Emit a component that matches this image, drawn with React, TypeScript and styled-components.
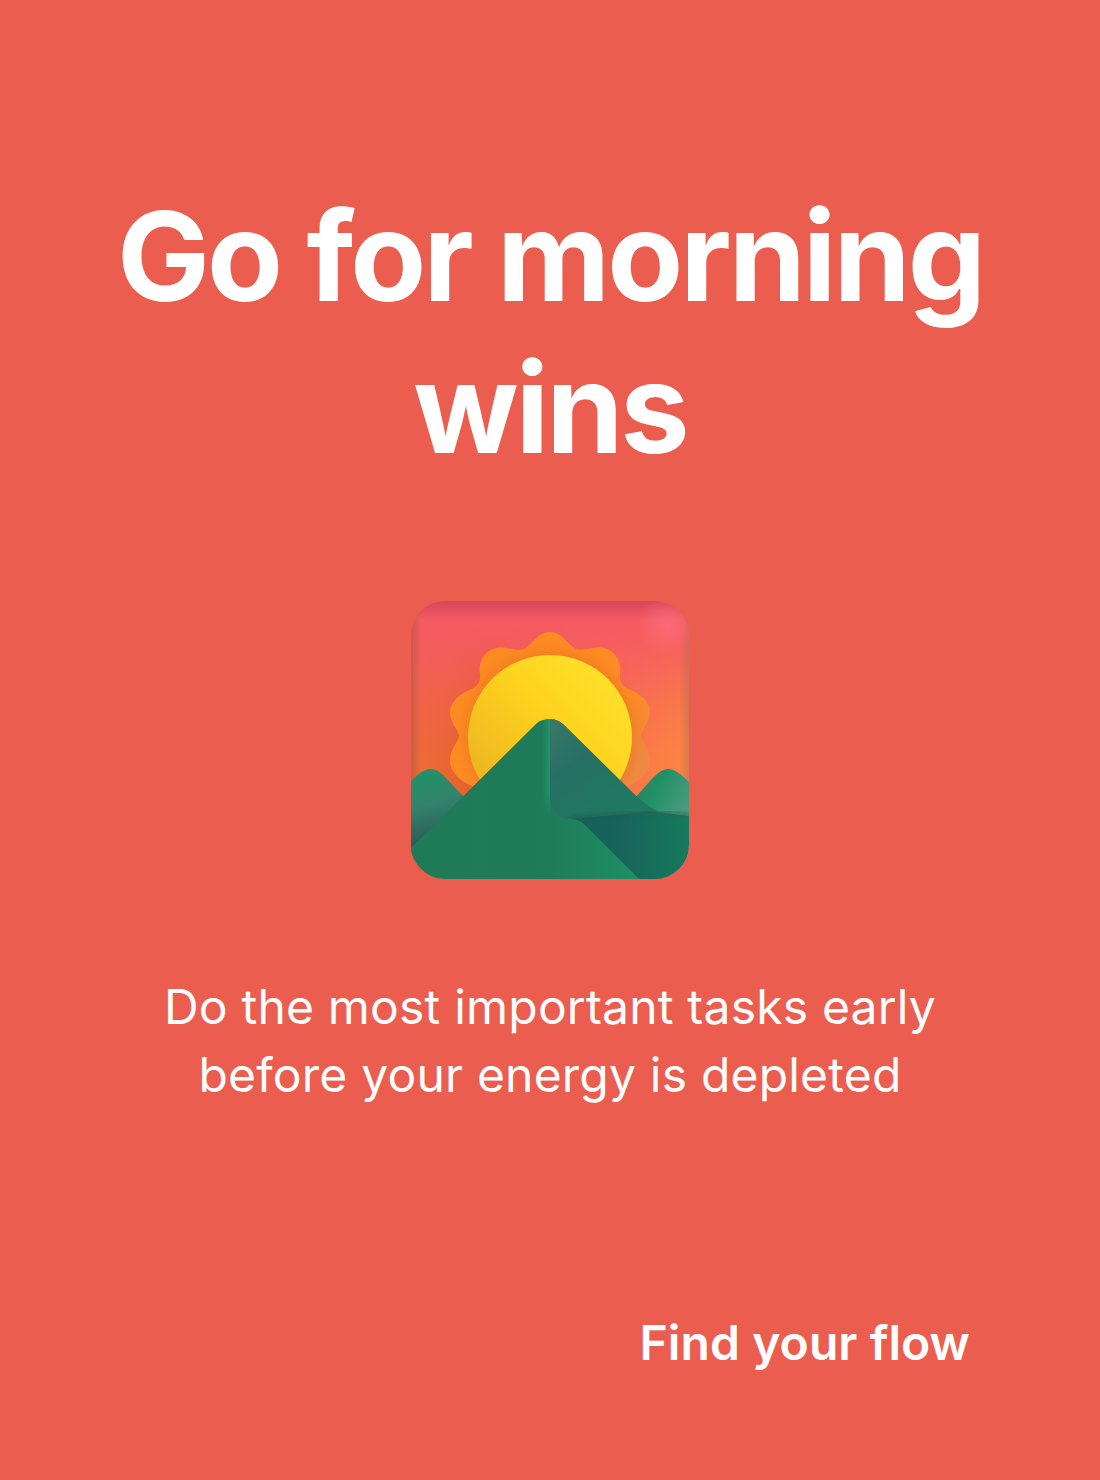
import React from "react";
import styled, { createGlobalStyle } from "styled-components";

const Global = createGlobalStyle`
  html, body { margin: 0; padding: 0; background: #eb5e4f; }
  * { box-sizing: border-box; }
`;

const Page = styled.main`
  width: 1100px;
  height: 1480px;
  background: #eb5e4f;
  color: #fff;
  font-family: Inter, "Liberation Sans", sans-serif;
  display: flex;
  flex-direction: column;
  align-items: center;
  padding: 180px 130px 0;
`;

const Title = styled.h1`
  margin: 0;
  width: 900px;
  flex: none;
  font-size: 124px;
  line-height: 152px;
  font-weight: 700;
  letter-spacing: -3px;
  text-align: center;
`;

const Art = styled.svg`
  display: block;
  width: 300px;
  height: 300px;
  margin-top: 106px;
  flex: none;
`;

const Subtitle = styled.p`
  margin: 83px 0 0;
  font-size: 48px;
  line-height: 68px;
  font-weight: 400;
  letter-spacing: 0.2px;
  text-align: center;
  white-space: nowrap;
`;

const Footer = styled.div`
  align-self: flex-end;
  margin-top: 200px;
  font-size: 48px;
  line-height: 68px;
  font-weight: 600;
  letter-spacing: 0.08px;
  white-space: nowrap;
`;

const SunriseIcon = () => (
  <Art viewBox="0 0 300 300" role="img" aria-label="Sunrise over mountains">
    <defs>
      <clipPath id="tile"><rect x="11" y="11" width="278" height="278" rx="34" /></clipPath>
      <linearGradient id="sky" x1="0" y1="0" x2="0" y2="1">
        <stop offset="0" stopColor="#f55a64" />
        <stop offset="0.22" stopColor="#f55e5e" />
        <stop offset="0.6" stopColor="#f4703f" />
        <stop offset="1" stopColor="#ee6a2e" />
      </linearGradient>
      <linearGradient id="skySide" x1="0" y1="0" x2="1" y2="0">
        <stop offset="0" stopColor="#e0642c" stopOpacity="0.3" />
        <stop offset="0.3" stopColor="#dd5424" stopOpacity="0.75" />
        <stop offset="0.7" stopColor="#ff7c50" stopOpacity="0.35" />
        <stop offset="1" stopColor="#ff8a45" stopOpacity="0.85" />
      </linearGradient>
      <linearGradient id="skyFade" gradientUnits="userSpaceOnUse" x1="0" y1="35" x2="0" y2="160">
        <stop offset="0" stopColor="#000" />
        <stop offset="1" stopColor="#fff" />
      </linearGradient>
      <mask id="skyMask" maskUnits="userSpaceOnUse" x="11" y="11" width="278" height="278">
        <rect x="11" y="11" width="278" height="278" fill="url(#skyFade)" />
      </mask>
      <linearGradient id="topEdge" x1="0" y1="0" x2="0" y2="1">
        <stop offset="0" stopColor="#c93f55" stopOpacity="0.7" />
        <stop offset="1" stopColor="#c93f55" stopOpacity="0" />
      </linearGradient>
      <linearGradient id="leftEdge" x1="0" y1="0" x2="1" y2="0">
        <stop offset="0" stopColor="#a8503a" stopOpacity="0.5" />
        <stop offset="1" stopColor="#a8503a" stopOpacity="0" />
      </linearGradient>
      <linearGradient id="rightEdge" x1="1" y1="0" x2="0" y2="0">
        <stop offset="0" stopColor="#b06a52" stopOpacity="0.45" />
        <stop offset="1" stopColor="#b06a52" stopOpacity="0" />
      </linearGradient>
      <radialGradient id="cornerGlow" gradientUnits="userSpaceOnUse" cx="268" cy="35" r="30">
        <stop offset="0" stopColor="#ff7080" stopOpacity="0.7" />
        <stop offset="1" stopColor="#ff7080" stopOpacity="0" />
      </radialGradient>
      <linearGradient id="rays" x1="0" y1="0" x2="0.6" y2="1">
        <stop offset="0" stopColor="#fb8a22" />
        <stop offset="0.7" stopColor="#fd8c24" />
        <stop offset="1" stopColor="#ee8a40" />
      </linearGradient>
      <linearGradient id="sun" x1="0" y1="1" x2="1" y2="0">
        <stop offset="0" stopColor="#e6ab22" />
        <stop offset="0.55" stopColor="#fdd21e" />
        <stop offset="1" stopColor="#ffe62e" />
      </linearGradient>
      <linearGradient id="hillL" x1="0" y1="0" x2="0.25" y2="1">
        <stop offset="0" stopColor="#1e9465" />
        <stop offset="0.4" stopColor="#33836c" />
        <stop offset="1" stopColor="#29494a" />
      </linearGradient>
      <linearGradient id="hillR" x1="0" y1="0" x2="1" y2="0.5">
        <stop offset="0" stopColor="#42785a" />
        <stop offset="0.5" stopColor="#1f9066" />
        <stop offset="1" stopColor="#489a7c" />
      </linearGradient>
      <linearGradient id="front" gradientUnits="userSpaceOnUse" x1="11" y1="0" x2="240" y2="0">
        <stop offset="0" stopColor="#1f7a56" />
        <stop offset="0.6" stopColor="#1e7b5b" />
        <stop offset="1" stopColor="#1f9064" />
      </linearGradient>
      <linearGradient id="foldGlow" gradientUnits="userSpaceOnUse" x1="142" y1="0" x2="150" y2="0">
        <stop offset="0" stopColor="#1f9a66" stopOpacity="0" />
        <stop offset="1" stopColor="#1f9a66" stopOpacity="0.9" />
      </linearGradient>
      <linearGradient id="foldFade" gradientUnits="userSpaceOnUse" x1="0" y1="129" x2="0" y2="229">
        <stop offset="0" stopColor="#fff" />
        <stop offset="0.7" stopColor="#fff" />
        <stop offset="1" stopColor="#000" />
      </linearGradient>
      <mask id="foldMask" maskUnits="userSpaceOnUse" x="130" y="125" width="30" height="110">
        <rect x="130" y="125" width="30" height="110" fill="url(#foldFade)" />
      </mask>
      <linearGradient id="flap" x1="0" y1="0" x2="0.7" y2="1">
        <stop offset="0" stopColor="#3b7869" />
        <stop offset="0.4" stopColor="#276f65" />
        <stop offset="1" stopColor="#1e7a60" />
      </linearGradient>
      <linearGradient id="lower" x1="0" y1="0" x2="1" y2="0">
        <stop offset="0" stopColor="#155c58" />
        <stop offset="0.55" stopColor="#17655b" />
        <stop offset="1" stopColor="#167a5c" />
      </linearGradient>
      <linearGradient id="seam" x1="0" y1="0" x2="1" y2="0">
        <stop offset="0" stopColor="#1a5550" stopOpacity="0.8" />
        <stop offset="1" stopColor="#3d5a50" stopOpacity="0.9" />
      </linearGradient>
      <filter id="soft"><feGaussianBlur stdDeviation="2.5" /></filter>
      <filter id="softer"><feGaussianBlur stdDeviation="4" /></filter>
    </defs>
    <g clipPath="url(#tile)">
      <rect x="11" y="11" width="278" height="278" fill="url(#sky)" />
      <rect x="11" y="11" width="278" height="278" fill="url(#skySide)" mask="url(#skyMask)" />
      <rect x="11" y="11" width="278" height="20" fill="url(#topEdge)" />
      <rect x="11" y="11" width="10" height="278" fill="url(#leftEdge)" />
      <rect x="279" y="11" width="10" height="278" fill="url(#rightEdge)" />
      <rect x="230" y="11" width="59" height="60" fill="url(#cornerGlow)" />
      <path
        d="M150 42C138 42 133 54 124 59C116 62 107 56 96 58C84 61 78 72 80 84C81 91 78 96 72 99C60 103 50 112 50 122C50 132 57 138 59 145C60 151 50 158 50 170C50 184 64 194 76 197L224 197C236 194 250 184 250 170C250 158 240 151 241 145C243 138 250 132 250 122C250 112 240 103 228 99C222 96 219 91 220 84C222 72 216 61 204 58C193 56 184 62 176 59C167 54 162 42 150 42Z"
        fill="url(#rays)"
      />
      <circle cx="150" cy="147" r="87" fill="#e8701c" opacity="0.4" filter="url(#softer)" />
      <circle cx="150" cy="147" r="82" fill="url(#sun)" />
      <path d="M11 191C18 184 24 179 30 179C36 179 40 182 44 186L110 255L11 270Z" fill="url(#hillL)" />
      <path d="M226 218L250 191C256 184 262 179 268 179C275 179 282 185 289 192V240H226Z" fill="url(#hillR)" />
      <path d="M150 129C156 129 161 132 165 136L237 207L256 222L289 226V289H230L150 240Z" fill="url(#lower)" />
      <path d="M150 129C156 129 161 132 165 136L237 207C244 213 250 218 258 221L170 229H150Z" fill="url(#flap)" />
      <path d="M170 229C205 225 250 218 289 225" fill="none" stroke="url(#seam)" strokeWidth="3" filter="url(#soft)" />
      <path d="M11 258L137 133C141 130 145 129 150 129V205C150 220 157 229 170 229C178 229 182 232 187 237L239 289H11Z" fill="url(#front)" />
      <path d="M142 131C145 129.500 147 129 150 129V229H142Z" fill="url(#foldGlow)" mask="url(#foldMask)" />
    </g>
  </Art>
);

export default function App() {
  return (
    <Page>
      <Global />
      <Title>
        Go for morning
        <br />
        wins
      </Title>
      <SunriseIcon />
      <Subtitle>
        Do the most important tasks early
        <br />
        before your energy is depleted
      </Subtitle>
      <Footer>Find your flow</Footer>
    </Page>
  );
}
